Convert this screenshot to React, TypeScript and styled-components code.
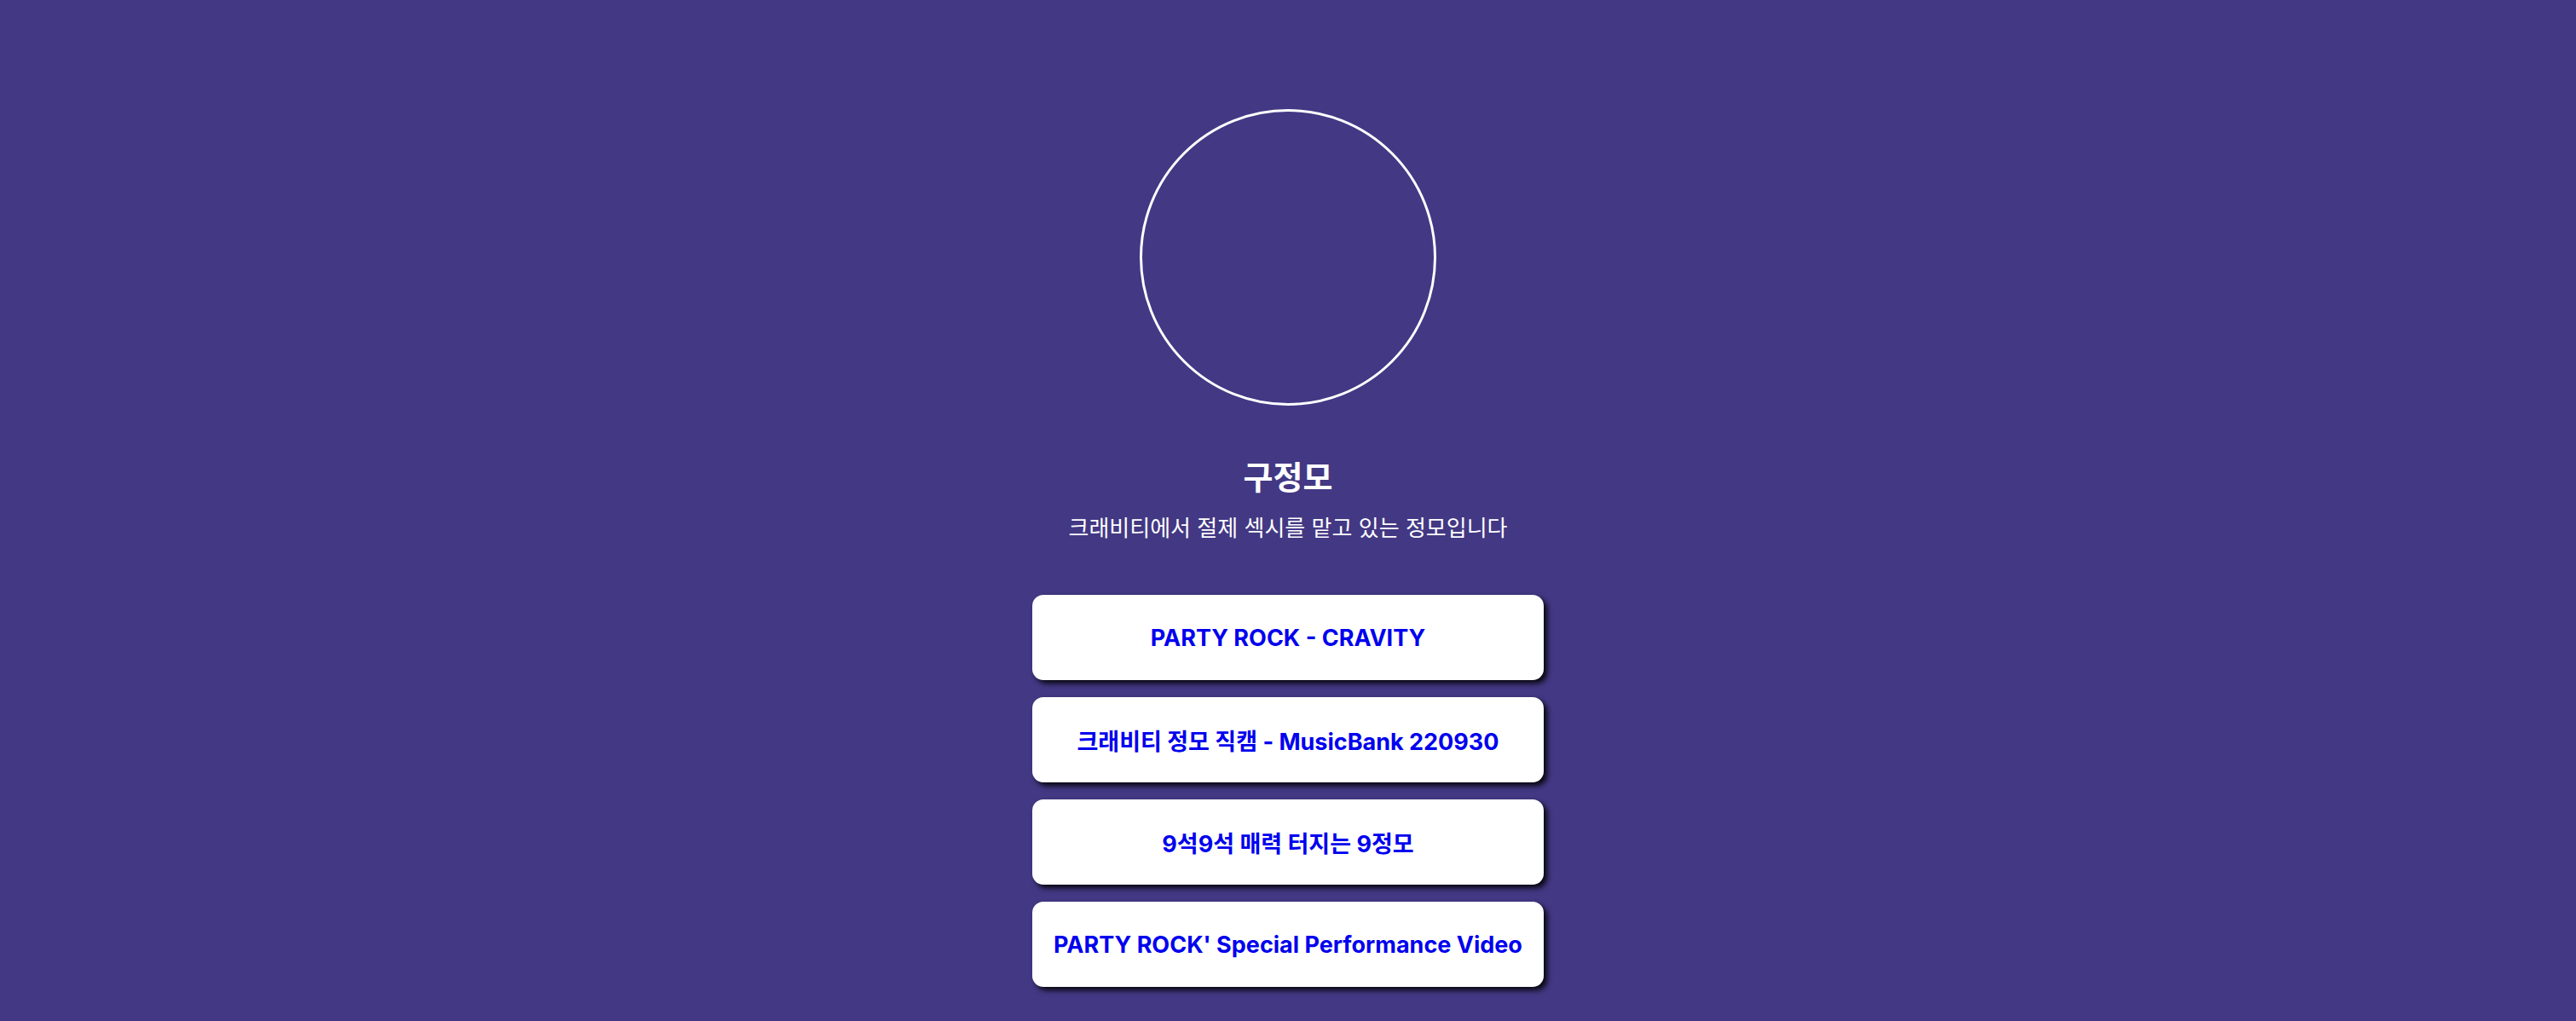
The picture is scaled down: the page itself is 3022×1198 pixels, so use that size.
import styled, { createGlobalStyle } from 'styled-components';

const GlobalStyle = createGlobalStyle`
  html, body {
    margin: 0;
    padding: 0;
    background: #433884;
  }
  body {
    font-family: Inter, 'Noto Sans CJK KR', sans-serif;
  }
`;

const links = [
  'PARTY ROCK - CRAVITY',
  '크래비티 정모 직캠 - MusicBank 220930',
  '9석9석 매력 터지는 9정모',
  "PARTY ROCK' Special Performance Video",
];

const Page = styled.main`
  display: flex;
  flex-direction: column;
  align-items: center;
  min-height: 1198px;
  padding-top: 128px;
  box-sizing: border-box;
`;

const Avatar = styled.div`
  width: 348px;
  height: 348px;
  box-sizing: border-box;
  border: 3px solid #ffffff;
  border-radius: 50%;
`;

const Name = styled.h1`
  margin: 60px 0 0;
  font-size: 38px;
  line-height: 48px;
  font-weight: 700;
  color: #ffffff;
`;

const Intro = styled.p`
  margin: 18px 0 0;
  font-size: 26px;
  line-height: 36px;
  font-weight: 400;
  color: #ffffff;
`;

const LinkList = styled.nav`
  display: flex;
  flex-direction: column;
  gap: 20px;
  margin-top: 60px;
`;

const LinkButton = styled.a`
  display: flex;
  align-items: center;
  justify-content: center;
  width: 600px;
  height: 100px;
  background: #ffffff;
  border-radius: 13px;
  box-shadow: 4px 4px 6px rgba(0, 0, 0, 0.9);
  color: rgb(0, 0, 238);
  font-size: 27px;
  font-weight: 700;
  text-decoration: none;
`;

const App = () => {
  return (
    <>
      <GlobalStyle />
      <Page>
        <Avatar />
        <Name>구정모</Name>
        <Intro>크래비티에서 절제 섹시를 맡고 있는 정모입니다</Intro>
        <LinkList>
          {links.map((label) => (
            <LinkButton key={label} href='#'>
              {label}
            </LinkButton>
          ))}
        </LinkList>
      </Page>
    </>
  );
};

export default App;
